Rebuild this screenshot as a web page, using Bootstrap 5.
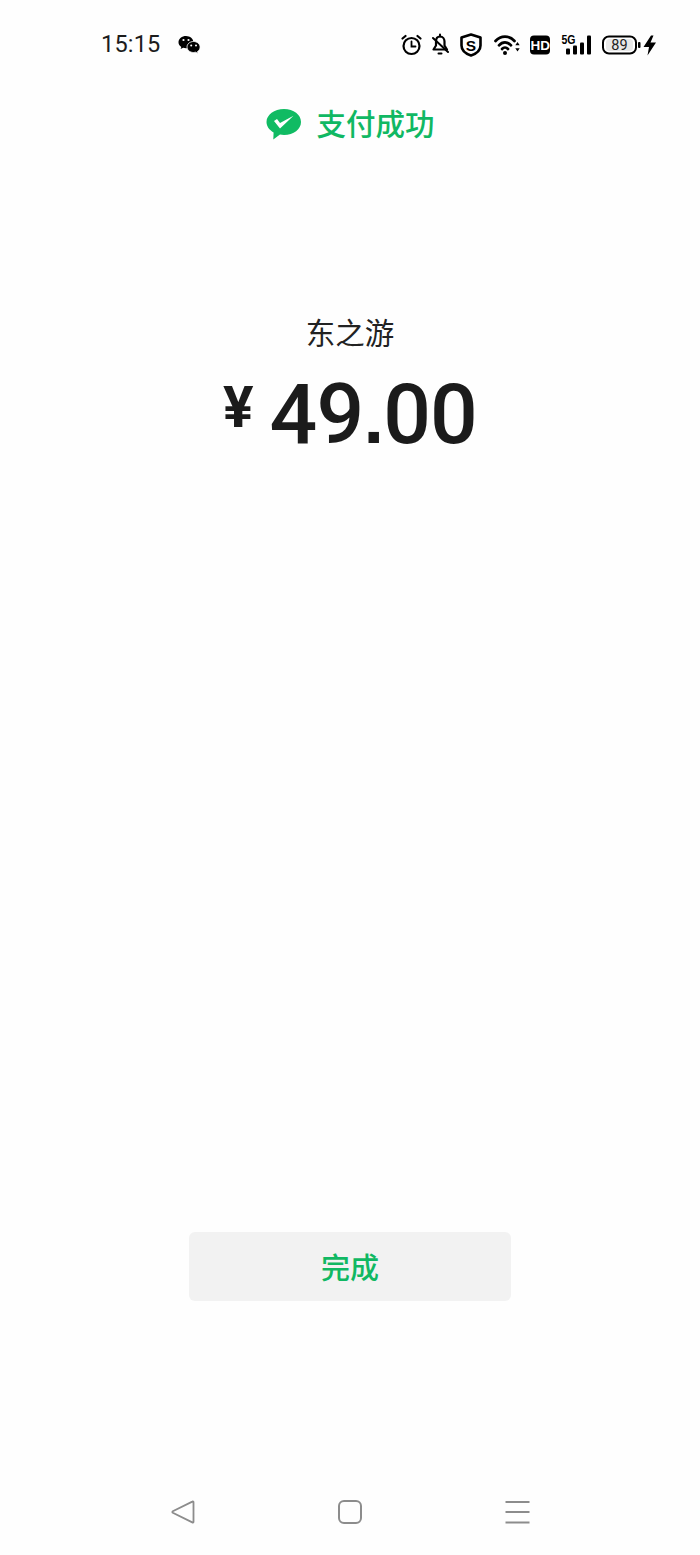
<!DOCTYPE html>
<html lang="zh-CN">
<head>
<meta charset="utf-8">
<title>支付成功</title>
<link href="https://cdn.jsdelivr.net/npm/bootstrap@5.3.0/dist/css/bootstrap.min.css" rel="stylesheet">
<style>
html, body { background: #fefefe; }
body { font-family: "Noto Sans CJK SC", "Noto Sans", sans-serif; color: #1a1a1a; }
.screen { width: 700px; height: 1555px; }
.status-row { height: 90px; padding-left: 101px; padding-right: 44px; }
.clock { font-family: Roboto, sans-serif; font-size: 23.5px; line-height: 1; letter-spacing: .2px; color: #1c1c1c; margin-right: 17px; }
.status-icons { gap: 10px; }
.status-icons svg, .clock-wrap svg, .navkeys svg { display: block; }
.pay-title { height: 70px; gap: 14px; }
.pay-title-text { font-size: 29.5px; font-weight: 500; color: #10b863; line-height: 1; margin-top: -4px; }
.merchant { font-size: 29.5px; line-height: 30px; margin-top: 156px; color: #222; }
.amount-line { margin-top: 32px; height: 74px; color: #1b1b1b; font-family: Roboto, sans-serif; font-weight: 500; }
.yen { font-size: 57px; font-weight: 700; line-height: 1; margin-top: 1px; margin-right: 16px; }
.sum { font-size: 84px; line-height: 74px; letter-spacing: -.8px; }
.sum-dot { font-family: "Liberation Sans", sans-serif; font-weight: 700; font-size: 74px; }
.done-btn { width: 322px; height: 69px; background: #f2f2f2; border: 0; border-radius: 6px; color: #10b863; font-size: 29px; font-weight: 500; line-height: 1; padding: 0; }
.done-btn:hover, .done-btn:active { background: #f2f2f2 !important; color: #10b863 !important; }
.navkeys { padding: 0 170px 33px 171px; margin-top: 200px; height: 54px; }
</style>
</head>
<body class="m-0">
<div class="screen d-flex flex-column">
  <div class="status-row d-flex align-items-center">
    <div class="clock-wrap d-flex align-items-center">
      <span class="clock">15:15</span>
      <svg width="23" height="20" viewBox="0 0 23 20" aria-hidden="true">
        <path d="M8 1C3.900 1 .5 3.700.5 7.200c0 2 1.100 3.700 2.800 4.800L2.600 14l2.600-1.200c.9.3 1.800.4 2.800.4 4.100 0 7.400-2.700 7.400-6S12.100 1 8 1z" fill="#000"/>
        <path d="M15.500 6.500c-3.700 0-6.500 2.500-6.500 5.500s2.800 5.500 6.500 5.500c.8 0 1.500-.1 2.200-.3l2.300 1.300-.5-2c1.700-1 2.600-2.700 2.600-4.500 0-3-2.900-5.500-6.600-5.500z" fill="#000" stroke="#fefefe" stroke-width=".8"/>
        <circle cx="5.500" cy="5" r="1.100" fill="#fff"/><circle cx="10.500" cy="5" r="1.100" fill="#fff"/>
        <circle cx="13.200" cy="10.500" r="1" fill="#fff"/><circle cx="18" cy="10.500" r="1" fill="#fff"/>
      </svg>
    </div>
    <div class="status-icons d-flex align-items-center ms-auto">
      <svg width="21" height="24" viewBox="0 0 21 24" aria-hidden="true" fill="none" stroke="#000" stroke-width="2.200" stroke-linecap="round">
        <circle cx="10.500" cy="13" r="8"/>
        <path d="M10.500 8.500V13.500H14.500" stroke-width="1.800"/>
        <path d="M1.500 5.500 4.500 3M19.500 5.500 16.500 3"/>
      </svg>
      <svg width="18" height="24" viewBox="0 0 18 24" aria-hidden="true" fill="none" stroke="#000" stroke-width="2.200" stroke-linejoin="round">
        <path d="M8 3.500c3 0 4.500 2.500 4.500 5v4l2.500 4H1.500L4 12.500v-4c0-2.500 1-5 4-5z"/>
        <path d="M8 1.500v2M6.500 20.500h3M1 5l15 14" stroke-width="2" stroke-linecap="round"/>
      </svg>
      <svg width="24" height="24" viewBox="0 0 24 24" aria-hidden="true">
        <path d="M11 1.500 20.500 4.500V12.500C20.500 17.500 16 20.800 11 22.500 6 20.800 1.500 17.500 1.500 12.500V4.500Z" fill="none" stroke="#000" stroke-width="2.600" stroke-linejoin="round"/>
        <text x="11" y="17.500" text-anchor="middle" font-family="Liberation Sans, sans-serif" font-weight="700" font-size="15.500" fill="#000">S</text>
      </svg>
      <svg width="26" height="24" viewBox="0 0 26 24" aria-hidden="true" fill="none" stroke="#000" stroke-width="2.700" stroke-linecap="round">
        <path d="M1.500 8C6.800 2.200 15.200 2.200 20.500 8"/>
        <path d="M5 12.300C8.400 8.300 13.600 8.300 17 12.300"/>
        <path d="M8 16c1.800-2 4.200-2 6 0"/>
        <circle cx="11" cy="20" r="2" fill="#000" stroke="none"/>
        <path d="M23.500 9 21.300 12.300H25.700ZM23.500 18.500 21.300 15.200H25.700Z" fill="#000" stroke="none"/>
      </svg>
      <svg width="21" height="24" viewBox="0 0 21 24" aria-hidden="true">
        <rect x="0" y="2.500" width="20" height="19" rx="4" fill="#000"/>
        <text x="10.300" y="17" text-anchor="middle" font-family="Liberation Sans, sans-serif" font-weight="700" font-size="13.500" fill="#fff">HD</text>
      </svg>
      <svg width="30" height="24" viewBox="0 0 30 24" aria-hidden="true">
        <text x="0.500" y="11" font-family="Liberation Sans, sans-serif" font-weight="700" font-size="12.500" textLength="14" lengthAdjust="spacingAndGlyphs" fill="#000">5G</text>
        <rect x="5" y="15.500" width="4" height="6" rx="1"/>
        <rect x="12" y="12.500" width="4" height="9" rx="1"/>
        <rect x="19" y="9.500" width="4" height="12" rx="1"/>
        <rect x="26" y="2.500" width="4" height="19" rx="1"/>
      </svg>
      <svg width="55" height="24" viewBox="0 0 55 24" aria-hidden="true">
        <rect x="2" y="3.500" width="33" height="17" rx="6" fill="#fff" stroke="#000" stroke-width="2"/>
        <rect x="5" y="6" width="27" height="12" rx="3.500" fill="#e8e8e8"/>
        <rect x="37" y="9" width="2.500" height="6" rx="1" fill="#000"/>
        <text x="18.500" y="17" text-anchor="middle" font-family="Roboto, sans-serif" font-size="14.500" fill="#222">89</text>
        <path d="M50 2.500 42.500 14H48L46.500 22.500 55 9.500H49.500L52.500 2.500Z" fill="#000"/>
      </svg>
    </div>
  </div>

  <div class="pay-title d-flex align-items-center justify-content-center">
    <svg width="37" height="34" viewBox="-1 0 37 34" aria-hidden="true">
      <path d="M18 1C8.300 1 .5 6.800.5 14c0 4.300 2.800 8 7.100 10.400L7.300 31.500l6.700-5c1.300.3 2.600.4 4 .4 9.700 0 17-5.800 17-13S27.700 1 18 1z" fill="#10bb63"/>
      <path d="M8 13 11 11 14 15 27.500 7.700 14 20.500Z" fill="#fff"/>
    </svg>
    <span class="pay-title-text">支付成功</span>
  </div>

  <div class="merchant text-center">东之游</div>
  <div class="amount-line d-flex justify-content-center align-items-start">
    <span class="yen">¥</span>
    <span class="sum">49<span class="sum-dot">.</span>00</span>
  </div>

  <div class="d-flex justify-content-center mt-auto">
    <button type="button" class="btn done-btn">完成</button>
  </div>

  <div class="navkeys d-flex justify-content-between align-items-center">
    <svg width="24" height="24" viewBox="0 0 24 24" aria-hidden="true">
      <path d="M22.500 2.200V21.800C22.500 22.500 22 22.800 21.300 22.400L1.800 12.800C1.200 12.400 1.200 11.600 1.800 11.200L21.300 1.600C22 1.200 22.500 1.500 22.500 2.200Z" fill="none" stroke="#8c8c8c" stroke-width="1.800"/>
    </svg>
    <svg width="24" height="24" viewBox="0 0 24 24" aria-hidden="true">
      <rect x="1" y="1" width="22" height="22" rx="5" fill="none" stroke="#8c8c8c" stroke-width="2"/>
    </svg>
    <svg width="25" height="24" viewBox="0 0 25 24" aria-hidden="true">
      <path d="M0.500 2H24.500M0.500 12H24.500M0.500 22.500H24.500" stroke="#8c8c8c" stroke-width="2"/>
    </svg>
  </div>
</div>
<script src="https://cdn.jsdelivr.net/npm/bootstrap@5.3.0/dist/js/bootstrap.bundle.min.js"></script>
</body>
</html>
